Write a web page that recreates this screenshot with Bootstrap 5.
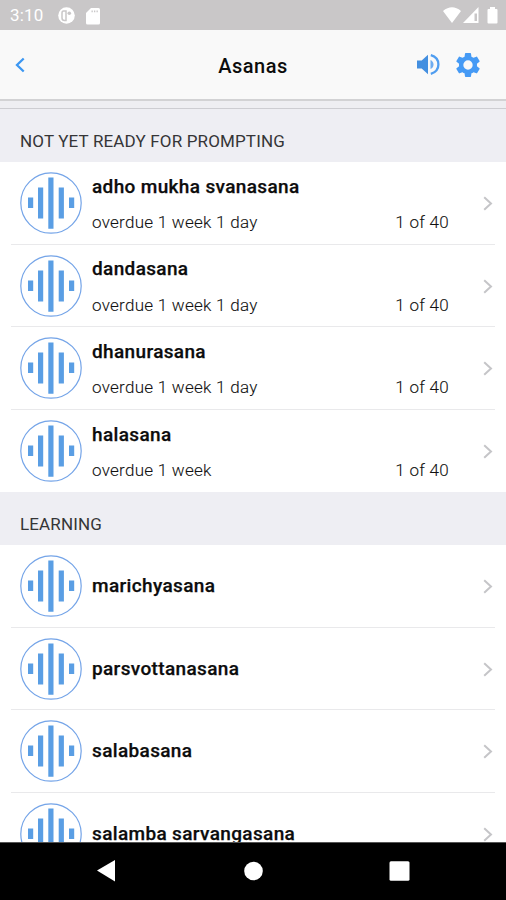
<!DOCTYPE html>
<html lang="en">
<head>
<meta charset="utf-8">
<meta name="viewport" content="width=device-width, initial-scale=1">
<title>Asanas</title>
<link href="https://cdn.jsdelivr.net/npm/bootstrap@5.3.0/dist/css/bootstrap.min.css" rel="stylesheet">
<style>
  body { font-family: Roboto, "Liberation Sans", sans-serif; color: #0c0c0c; height: 900px; }
  svg { display: block; flex: none; }
  main { min-height: 0; }
  .status { height: 30px; background: #c9c7c8; color: #fff; padding: 2px 8px 0 10px; font-size: 17px; letter-spacing: .2px; }
  .notice { margin-left: 14px; }
  .sd-card { margin-left: 11px; }
  .topbar { height: 69px; background: #f9f9f9; padding: 0 15px; display: grid; grid-template-columns: 1fr auto 1fr; }
  .topbar h1 { font-size: 20px; font-weight: 500; letter-spacing: .5px; padding-top: 2px; }
  .topbar button { line-height: 0; }
  .actions { margin-right: 11px; }
  .strip { height: 9.7px; background: #eeeef2; border-top: 2px solid #d2d2d4; border-bottom: 1px solid #cdcdd2; }
  .group-head { background: #eeeef3; font-size: 17px; letter-spacing: .15px; font-weight: 400; color: #353537; padding: 22.3px 20px 0; height: 53.3px; line-height: 20px; }
  .group-head.later { height: 52.6px; padding-top: 21.8px; }
  .entry { height: 82.6px; margin: 0 11px; padding: 10px 2px 9.6px 9px; border-bottom: 1px solid #e9e9eb; gap: 10px; }
  .entry:last-child { border-bottom-color: transparent; }
  .entry-name { font-size: 19px; letter-spacing: .35px; font-weight: 500; line-height: 22px; -webkit-text-stroke: .25px; }
  .entry-lines { padding-top: 2px; }
  .entry-meta { font-size: 17px; font-weight: 300; line-height: 20px; color: #111; margin-top: 14.3px; padding-right: 24px; letter-spacing: .27px; -webkit-text-stroke: .1px; }
  .softkeys { height: 58px; background: #000; border-top: 1px solid #555; }
</style>
<script src="https://cdn.jsdelivr.net/npm/bootstrap@5.3.0/dist/js/bootstrap.bundle.min.js"></script>
</head>
<body class="d-flex flex-column overflow-hidden bg-white">
<svg width="0" height="0" class="position-absolute">
  <symbol id="wave" viewBox="0 0 62 62">
    <circle cx="31" cy="31" r="30.2" fill="#fff" stroke="#74a4e8" stroke-width="1.2"/>
    <path fill="#5a9ee4" d="M8 25.5h5.200v10.500H8zM18 15.500h5.200v31H18zM28.300 5.500h5.200v51.200h-5.200zM38.700 15.500h5.200v31h-5.200zM49 25.500h5.200v10.500H49z"/>
  </symbol>
  <symbol id="next" viewBox="0 0 10 16"><path d="M1.200 2.200L8 8.500 1.200 14.800" fill="none" stroke="#c5c5c8" stroke-width="2"/></symbol>
</svg>

<header class="flex-shrink-0">
  <div class="status d-flex align-items-center">
    <span>3:10</span>
    <svg class="notice" width="17" height="18" viewBox="0 0 17 18"><circle cx="8.500" cy="8.500" r="8.300" fill="#fff"/><path d="M8 4H5.500Q4 4 4 6v5q0 2.500 2.500 2.500H8z" fill="none" stroke="#c9c7c8" stroke-width="1.500"/><circle cx="11.300" cy="6.300" r="1.800" fill="#c9c7c8"/></svg>
    <svg class="sd-card" width="14" height="17" viewBox="0 0 14 17"><path d="M5 0h7.500Q14 0 14 1.500v13.500q0 1.500-1.500 1.500h-11Q0 16.500 0 15V5z" fill="#fff"/><path d="M5.500 3.300h1.300M8 3.300h1.300M10.500 3.300h1.300" stroke="#c9c7c8" stroke-width="1.800"/></svg>
    <svg class="ms-auto" width="55" height="18" viewBox="0 0 55 18"><path d="M0 4Q9-3.500 18 4L9 16zM35.500 0v16H20z" fill="#fff"/><path d="M31.500 6.500h2.500V14h-2.500z" fill="#c9c7c8"/><path d="M47 0h5v2h1.500q1 0 1 1v12.500q0 1-1 1h-8q-1 0-1-1V3q0-1 1-1H47z" fill="#fff"/></svg>
  </div>
  <nav class="topbar align-items-center">
    <button class="btn p-0 border-0 text-start" aria-label="Back"><svg width="10" height="16" viewBox="0 0 10 16"><path d="M8.700 1.500L2 8l6.700 6.500" fill="none" stroke="#3c97f2" stroke-width="2.300"/></svg></button>
    <h1 class="m-0">Asanas</h1>
    <div class="actions d-flex justify-content-end align-items-center gap-3">
      <button class="btn p-0 border-0" aria-label="Sound"><svg width="23" height="23" viewBox="0 0 23 23"><path d="M0 7.500h4.700L11 1.800v19.400l-6.300-5.700H0z" fill="#438fe0"/><path d="M13.500 7q3 1.500 3 4.500t-3 4.500z" fill="#6eacf0"/><path d="M13.800 2.200q7.600 2.200 7.600 9.300t-7.600 9.300" fill="none" stroke="#4f9df0" stroke-width="2.300"/></svg></button>
      <button class="btn p-0 border-0" aria-label="Settings"><svg width="24" height="24" viewBox="2.100 2 19.800 20"><path fill="#459af5" d="M19.430 12.980c.04-.32.070-.64.070-.98s-.03-.66-.07-.98l2.110-1.650c.19-.15.240-.42.120-.64l-2-3.460c-.12-.22-.39-.3-.61-.22l-2.490 1c-.52-.4-1.080-.73-1.690-.98l-.38-2.650C14.460 2.180 14.250 2 14 2h-4c-.25 0-.46.180-.49.420l-.38 2.650c-.61.250-1.170.59-1.690.98l-2.490-1c-.23-.09-.49 0-.61.220l-2 3.460c-.13.220-.07.490.12.640l2.110 1.650c-.04.320-.07.650-.07.980s.03.660.07.980l-2.110 1.650c-.19.150-.24.420-.12.640l2 3.460c.12.220.39.300.61.220l2.490-1c.52.400 1.080.730 1.690.980l.38 2.650c.03.240.24.420.49.420h4c.25 0 .46-.18.490-.42l.38-2.650c.61-.25 1.170-.59 1.690-.98l2.490 1c.23.090.49 0 .61-.22l2-3.460c.12-.22.070-.49-.12-.64l-2.110-1.650zM12 15.900a3.900 3.900 0 1 1 0-7.800 3.900 3.900 0 0 1 0 7.800z"/></svg></button>
    </div>
  </nav>
</header>

<main class="flex-grow-1 overflow-hidden">
  <div class="strip"></div>
  <section>
    <h2 class="group-head m-0">NOT YET READY FOR PROMPTING</h2>
    <div class="entry d-flex align-items-center"><svg width="62" height="62"><use href="#wave"/></svg><div class="entry-lines flex-grow-1"><div class="entry-name">adho mukha svanasana</div><div class="entry-meta d-flex justify-content-between"><span>overdue 1 week 1 day</span><span>1 of 40</span></div></div><svg width="10" height="16"><use href="#next"/></svg></div>
    <div class="entry d-flex align-items-center"><svg width="62" height="62"><use href="#wave"/></svg><div class="entry-lines flex-grow-1"><div class="entry-name">dandasana</div><div class="entry-meta d-flex justify-content-between"><span>overdue 1 week 1 day</span><span>1 of 40</span></div></div><svg width="10" height="16"><use href="#next"/></svg></div>
    <div class="entry d-flex align-items-center"><svg width="62" height="62"><use href="#wave"/></svg><div class="entry-lines flex-grow-1"><div class="entry-name">dhanurasana</div><div class="entry-meta d-flex justify-content-between"><span>overdue 1 week 1 day</span><span>1 of 40</span></div></div><svg width="10" height="16"><use href="#next"/></svg></div>
    <div class="entry d-flex align-items-center"><svg width="62" height="62"><use href="#wave"/></svg><div class="entry-lines flex-grow-1"><div class="entry-name">halasana</div><div class="entry-meta d-flex justify-content-between"><span>overdue 1 week</span><span>1 of 40</span></div></div><svg width="10" height="16"><use href="#next"/></svg></div>
  </section>
  <section>
    <h2 class="group-head later m-0">LEARNING</h2>
    <div class="entry d-flex align-items-center"><svg width="62" height="62"><use href="#wave"/></svg><div class="entry-name flex-grow-1">marichyasana</div><svg width="10" height="16"><use href="#next"/></svg></div>
    <div class="entry d-flex align-items-center"><svg width="62" height="62"><use href="#wave"/></svg><div class="entry-name flex-grow-1">parsvottanasana</div><svg width="10" height="16"><use href="#next"/></svg></div>
    <div class="entry d-flex align-items-center"><svg width="62" height="62"><use href="#wave"/></svg><div class="entry-name flex-grow-1">salabasana</div><svg width="10" height="16"><use href="#next"/></svg></div>
    <div class="entry d-flex align-items-center"><svg width="62" height="62"><use href="#wave"/></svg><div class="entry-name flex-grow-1">salamba sarvangasana</div><svg width="10" height="16"><use href="#next"/></svg></div>
  </section>
</main>

<footer class="softkeys flex-shrink-0">
  <svg width="506" height="57" viewBox="0 0 506 57" fill="#fff"><path d="M97 27.500L115 17v21.500z"/><circle cx="253.500" cy="28" r="9.300"/><rect x="389.500" y="18.300" width="20" height="19.500" rx="1.500"/></svg>
</footer>
</body>
</html>
